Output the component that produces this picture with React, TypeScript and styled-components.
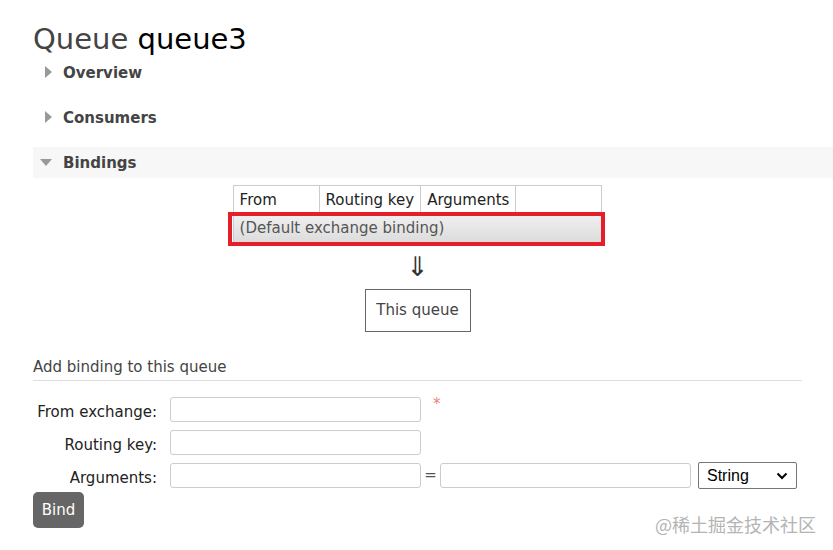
import styled, { createGlobalStyle } from "styled-components";

const GlobalStyle = createGlobalStyle`
  html, body {
    margin : 0;
    padding : 0;
    background : #ffffff;
    font-family : "DejaVu Sans", Verdana, sans-serif;
    color : #444;
  }
`;

const columns = [
  { label: "From", width: 86 },
  { label: "Routing key", width: 100 },
  { label: "Arguments", width: 93 },
  { label: "", width: 86 },
];

const App = () => {
  return (
    <StPage>
      <GlobalStyle />
      <StTitle>
        Queue <StTitleName>queue3</StTitleName>
      </StTitle>

      <StSectionHeader>
        <StArrowRight />
        <StSectionTitle>Overview</StSectionTitle>
      </StSectionHeader>
      <StSectionHeader>
        <StArrowRight />
        <StSectionTitle>Consumers</StSectionTitle>
      </StSectionHeader>
      <StSectionHeader open>
        <StArrowDown />
        <StSectionTitle>Bindings</StSectionTitle>
      </StSectionHeader>

      <StDiagram>
        <StTableWrap>
          <StTable>
            <thead>
              <tr>
                {columns.map((c) => (
                  <StTh key={c.label || "empty"} style={{ width: c.width }}>
                    {c.label}
                  </StTh>
                ))}
              </tr>
            </thead>
            <tbody>
              <tr>
                <StDefaultCell colSpan={4}>(Default exchange binding)</StDefaultCell>
              </tr>
            </tbody>
          </StTable>
          <StHighlight />
        </StTableWrap>
        <StDownArrow>⇓</StDownArrow>
        <StQueueBox>This queue</StQueueBox>
      </StDiagram>

      <StSubTitle>Add binding to this queue</StSubTitle>

      <StForm>
        <StLabel>From exchange:</StLabel>
        <StFieldRow>
          <StInput type="text" />
          <StRequired>*</StRequired>
        </StFieldRow>
        <StLabel>Routing key:</StLabel>
        <StFieldRow>
          <StInput type="text" />
        </StFieldRow>
        <StLabel>Arguments:</StLabel>
        <StFieldRow>
          <StInput type="text" />
          <StEquals>=</StEquals>
          <StInput type="text" />
          <StSelectWrap>
            <StSelect defaultValue="String">
              <option>String</option>
              <option>Number</option>
              <option>Boolean</option>
              <option>List</option>
            </StSelect>
            <StChevron viewBox="0 0 12 8" width="12" height="8">
              <path d="M1.5 1.5 L6 6 L10.5 1.5" fill="none" stroke="#000" strokeWidth="2" />
            </StChevron>
          </StSelectWrap>
        </StFieldRow>
      </StForm>

      <StBindButton>Bind</StBindButton>

      <StWatermark>@稀土掘金技术社区</StWatermark>
    </StPage>
  );
};

export default App;

const StPage = styled.div`
  position : relative;
  width : 833px;
  height : 550px;
  box-sizing : border-box;
  padding-left : 33px;
  overflow : hidden;
`;

const StTitle = styled.h1`
  margin : 0;
  padding-top : 21px;
  height : 36px;
  font-size : 29px;
  font-weight : 400;
  line-height : 36px;
  color : #444;
`;

const StTitleName = styled.span`
  color : #000;
`;

const StSectionHeader = styled.div<{ open?: boolean }>`
  display : flex;
  align-items : center;
  height : 31px;
  margin-bottom : ${(p) => (p.open ? "0" : "14px")};
  padding-left : ${(p) => (p.open ? "7px" : "12px")};
  background : ${(p) => (p.open ? "#f7f7f7" : "transparent")};
`;

const StArrowRight = styled.span`
  width : 0;
  height : 0;
  border-top : 6px solid transparent;
  border-bottom : 6px solid transparent;
  border-left : 7px solid #999;
  margin-right : 11px;
  margin-top : -2px;
`;

const StArrowDown = styled.span`
  width : 0;
  height : 0;
  border-left : 6px solid transparent;
  border-right : 6px solid transparent;
  border-top : 7px solid #999;
  margin-right : 11px;
`;

const StSectionTitle = styled.span`
  font-size : 15px;
  font-weight : 700;
  color : #444;
`;

const StDiagram = styled.div`
  width : 769px;
  display : flex;
  flex-direction : column;
  align-items : center;
  padding-top : 7px;
`;

const StTableWrap = styled.div`
  position : relative;
`;

const StTable = styled.table`
  border-collapse : collapse;
  table-layout : fixed;
  font-size : 15px;
  color : #222;
`;

const StTh = styled.th`
  box-sizing : border-box;
  height : 28px;
  padding : 0 6px;
  text-align : left;
  font-weight : 400;
  white-space : nowrap;
  overflow : hidden;
  border : 1px solid #ccc;
  border-bottom : none;
`;

const StDefaultCell = styled.td`
  height : 28px;
  padding : 0 6px;
  color : #555;
  white-space : nowrap;
  background : linear-gradient(#f0f0f0, #dcdcdc);
  border-left : 1px solid #ccc;
  border-right : 1px solid #ccc;
`;

const StHighlight = styled.div`
  position : absolute;
  left : -5px;
  right : -3px;
  top : 27px;
  height : 34px;
  box-sizing : border-box;
  border : 4px solid #e41f2b;
  pointer-events : none;
`;

const StDownArrow = styled.div`
  margin-top : 10px;
  font-size : 27px;
  line-height : 30px;
  color : #333;
`;

const StQueueBox = styled.div`
  margin-top : 7px;
  width : 106px;
  height : 43px;
  box-sizing : border-box;
  border : 1px solid #666;
  display : flex;
  align-items : center;
  justify-content : center;
  font-size : 15px;
  color : #444;
`;

const StSubTitle = styled.div`
  width : 769px;
  margin-top : 26px;
  padding-bottom : 4px;
  border-bottom : 1px solid #ddd;
  font-size : 15px;
  color : #444;
`;

const StForm = styled.div`
  display : grid;
  grid-template-columns : 124px auto;
  column-gap : 13px;
  row-gap : 8px;
  align-items : center;
  margin-top : 16px;
`;

const StLabel = styled.div`
  text-align : right;
  font-size : 15px;
  line-height : 18px;
  padding-top : 6px;
  color : #222;
`;

const StFieldRow = styled.div`
  display : flex;
  align-items : center;
  height : 25px;
`;

const StInput = styled.input`
  width : 251px;
  height : 25px;
  box-sizing : border-box;
  border : 1px solid #ccc;
  border-radius : 3px;
  padding : 0 4px;
  font-size : 15px;
  font-family : "DejaVu Sans", sans-serif;
  outline : none;
`;

const StRequired = styled.span`
  margin-left : 12px;
  margin-top : -10px;
  color : #f08080;
  font-size : 15px;
`;

const StEquals = styled.span`
  width : 19px;
  text-align : center;
  font-size : 15px;
  color : #555;
`;

const StSelectWrap = styled.div`
  position : relative;
  margin-left : 7px;
  display : flex;
`;

const StSelect = styled.select`
  appearance : none;
  width : 99px;
  height : 27px;
  font-family : "Liberation Sans", Arial, sans-serif;
  font-size : 16px;
  color : #000;
  border : 1px solid #767676;
  border-radius : 2px;
  background : #fff;
  padding-left : 8px;
`;

const StChevron = styled.svg`
  position : absolute;
  right : 9px;
  top : 10px;
  pointer-events : none;
`;

const StBindButton = styled.button`
  margin-top : 4px;
  width : 51px;
  height : 36px;
  border : none;
  border-radius : 5px;
  background : #666;
  color : #fff;
  font-family : "DejaVu Sans", sans-serif;
  font-size : 15px;
  padding : 0;
`;

const StWatermark = styled.div`
  position : absolute;
  right : 17px;
  top : 511px;
  font-family : "Noto Sans CJK SC", "DejaVu Sans", sans-serif;
  font-size : 18px;
  color : #b4b4b4;
`;
